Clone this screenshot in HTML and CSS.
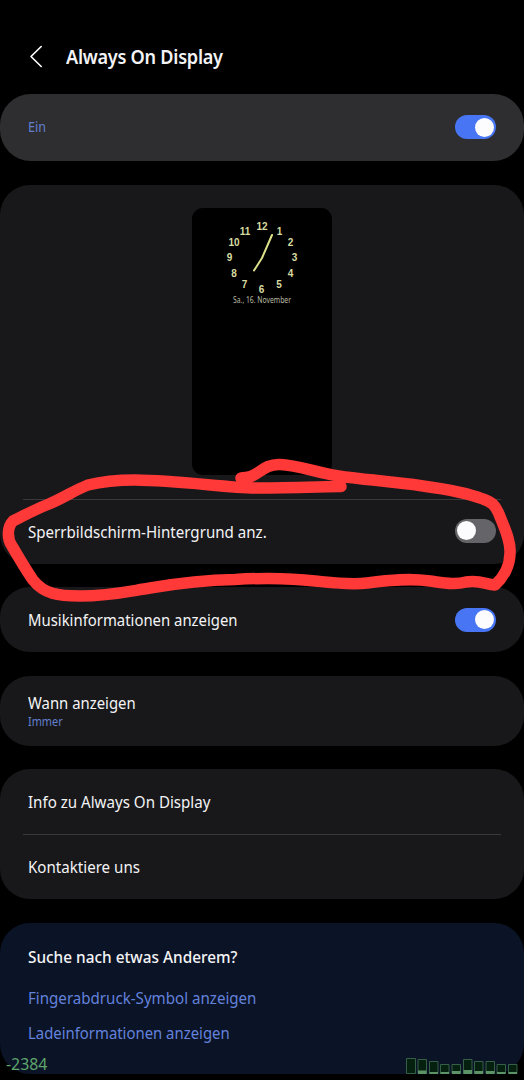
FILE: index.html
```html
<!DOCTYPE html>
<html lang="de">
<head>
<meta charset="utf-8">
<title>Always On Display</title>
<link rel="stylesheet" href="styles.css">
</head>
<body>
<div class="screen">
  <header class="header">
    <svg class="back" width="14" height="24" viewBox="0 0 14 24"><path d="M12.200 2.500 2 12.500 12.200 22.500"/></svg>
    <h1 class="title"><span class="fit">Always On Display</span></h1>
  </header>
  <main class="cards">
    <section class="card master">
      <span class="small state fit">Ein</span><span class="switch on"></span>
    </section>
    <section class="card preview-card">
      <div class="preview-area">
        <div class="phone">
          <svg class="clock" width="140" height="110" viewBox="0 0 140 110">
            <g class="numbers">
              <text x="70" y="22">12</text><text x="87.5" y="27">1</text><text x="98.5" y="38">2</text><text x="102.500" y="53">3</text><text x="98.5" y="69">4</text><text x="87" y="80">5</text><text x="69.500" y="84.500">6</text><text x="52.5" y="80">7</text><text x="42" y="69">8</text><text x="37.5" y="53">9</text><text x="42" y="38">10</text><text x="53" y="27">11</text>
            </g>
            <path class="hands" d="M80 27 70 50 62 62.500"/>
            <text class="date" x="70" y="95" textLength="58" lengthAdjust="spacingAndGlyphs">Sa., 16. November</text>
          </svg>
        </div>
      </div>
      <div class="row divided wallpaper"><span class="label fit wide">Sperrbildschirm-Hintergrund anz.</span><span class="switch"></span></div>
    </section>
    <section class="card music"><span class="label fit">Musikinformationen anzeigen</span><span class="switch on"></span></section>
    <section class="card when"><span class="label fit">Wann anzeigen</span><span class="small interval fit">Immer</span></section>
    <section class="card info">
      <div class="row"><span class="label fit wide">Info zu Always On Display</span></div>
      <div class="row divided"><span class="label fit wide">Kontaktiere uns</span></div>
    </section>
    <section class="card search">
      <h2 class="label fit">Suche nach etwas Anderem?</h2>
      <a class="label link fit wide">Fingerabdruck-Symbol anzeigen</a>
      <a class="label link fit">Ladeinformationen anzeigen</a>
    </section>
  </main>
  <svg class="marker" width="524" height="1080" viewBox="0 0 524 1080">
    <path d="M341 486.500 C310 487 280 488 255 488 C225 487.500 180 480.500 135 480 C112 480 100 482 88 485 C75 490 65 497 49 504 C36 509 25 515 13 521 C7 527 7 539 12 546 C19 558 26 570 33 580 C44 594 58 596 80 596 C110 596 130 591 150 588 C185 582 205 580 235 579.500 C260 578 290 578 315 581 C335 583 350 585 367 583 C390 580 410 578 430 581 C445 583 455 585 466 582 C480 580 485 584 495 585 C504 577 510 565 510 553 C511 540 503 525 499 514 C495 505 492 502 483 499 C465 492 445 489 423 486 C395 482 370 480 345 477 C320 474 299 465 280 464.500 C265 464 260 473 252 476 C248 478 245 477 241 478"/>
  </svg>
  <div class="monitor">
    <span class="current fit">-2384</span>
    <svg class="bars" width="112" height="17" viewBox="0 0 112 17">
      <g class="bar"><path d="M.5.5h9v15h-9zM12 1.500h8.500v14H12zM23.500 3.500H32v12h-8.500zM34.500 6.500H43v9h-8.500zM46 6.500h8.500v9H46zM57.500 1.500H66v14h-8.500zM68.500 3.500H77v12h-8.500zM80 3.500h8.500v12H80zM91 6.500h8.500v9H91zM102.500 6.500h8.500v9h-8.500z"/></g>
      <path class="level" d="M12 12.500h8.500V16H12zM23.500 14H32v2h-8.500zM34.500 14H43v2h-8.500zM46 13h8.500v3H46zM57.500 12H66v4h-8.500zM68.500 13H77v3h-8.500zM80 13h8.500v3H80zM91 14h8.500v2H91zM102.500 14h8.500v2h-8.500z"/>
    </svg>
  </div>
</div>
</body>
</html>
```
FILE: styles.css
```css
* { box-sizing: border-box; }
body { margin: 0; background: #000; }
.screen {
  position: relative;
  width: 524px;
  height: 1080px;
  overflow: hidden;
  background: #000;
  color: #f3f3f5;
  font-family: "Noto Sans", sans-serif;
}
.fit { display: inline-block; transform: scaleX(.93); transform-origin: 0 50%; white-space: nowrap; }
.fit.wide { transform: scaleX(.944); }
.header { height: 93.5px; display: flex; align-items: center; padding: 19px 0 0 29px; }
.back { fill: none; stroke: #fff; stroke-width: 1.6; stroke-linecap: round; stroke-linejoin: round; }
.title { margin: 1px 0 0 22.5px; font-size: 19.5px; line-height: 26px; font-weight: 600; letter-spacing: -.3px; }
.cards { display: flex; flex-direction: column; gap: 23.5px; }
.card { background: #18181a; border-radius: 30px; }
.master, .music { display: flex; align-items: center; justify-content: space-between; padding: 0 28px; }
.master { height: 67.5px; background: #2e2e30; border-radius: 31px; }
.label { font-size: 16px; line-height: 22px; font-weight: 400; }
.small { font-size: 12.5px; line-height: 17px; color: #6280cf; }
.state { font-size: 13.5px; }
.switch { width: 41px; height: 24px; padding: 2px; border-radius: 12px; background: #656468; display: flex; align-items: center; }
.switch::before { content: ""; width: 19px; height: 19px; border-radius: 50%; background: #fcfcff; }
.switch.on { background: #4775f3; justify-content: flex-end; }
.wallpaper .switch { margin-top: -2px; }
.preview-card { height: 379px; }
.preview-area { height: 314px; padding-top: 23px; display: flex; justify-content: center; align-items: flex-start; }
.phone { width: 140px; height: 267px; border-radius: 11px; background: #000; }
.clock { display: block; }
.numbers { fill: #d8dca2; font: 700 10px "Liberation Sans", sans-serif; text-anchor: middle; }
.hands { fill: none; stroke: #dce18a; stroke-width: 2; stroke-linecap: round; stroke-linejoin: round; }
.date { fill: #b9bba0; font: 400 8px "Noto Sans", sans-serif; text-anchor: middle; }
.row { height: 65px; margin: 0 23px; padding: 0 5px; display: flex; align-items: center; justify-content: space-between; }
.divided { border-top: 1px solid #39393b; }
.music { height: 65px; }
.when { height: 70px; display: flex; flex-direction: column; justify-content: center; align-items: flex-start; padding: 0 28px; }
.interval { margin-top: -1px; transform: scaleX(.87); }
.info { height: 130px; }
.search { height: 151.5px; background: #0b1326; display: flex; flex-direction: column; align-items: flex-start; padding: 23px 28px; }
.search h2 { margin: 0 0 19px; font-weight: 500; transform: scaleX(.96); }
.search .link { margin-bottom: 13px; }
.link { color: #6382dc; }
.marker { position: absolute; inset: 0; fill: none; stroke: #ff3838; stroke-width: 11.5; stroke-linecap: round; stroke-linejoin: round; }
.monitor { position: absolute; left: 6px; right: 6px; bottom: 5px; display: flex; align-items: flex-end; justify-content: space-between; }
.current { color: #5fa56c; font-size: 16px; line-height: 20px; margin-bottom: 1px; transform: scaleX(.99); }
.bar { fill: #062010; stroke: #355f46; stroke-width: 1; }
.level { fill: #5c9467; }
```
